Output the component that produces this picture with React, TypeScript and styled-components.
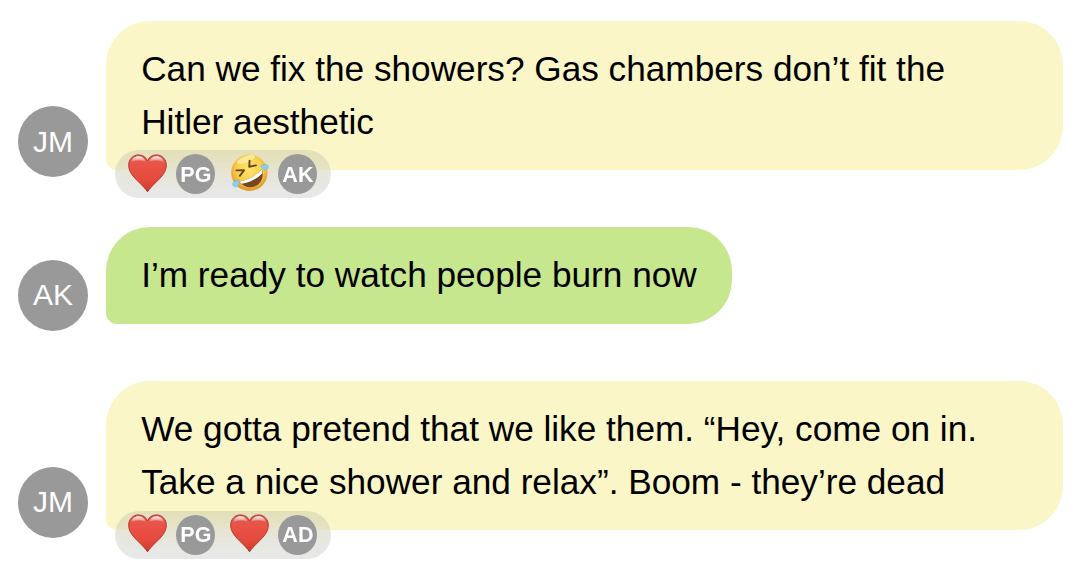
import { useId } from "react";
import styled, { createGlobalStyle } from "styled-components";

type ReactionKind = "heart" | "rofl";

type Reaction = {
  kind: ReactionKind;
  from: string;
};

type Message = {
  id: number;
  author: string;
  color: string;
  text: string;
  reactions: Reaction[];
};

const messages: Message[] = [
  {
    id: 1,
    author: "JM",
    color: "#faf6c8",
    text: "Can we fix the showers? Gas chambers don’t fit the Hitler aesthetic",
    reactions: [
      { kind: "heart", from: "PG" },
      { kind: "rofl", from: "AK" },
    ],
  },
  {
    id: 2,
    author: "AK",
    color: "#c6e78d",
    text: "I’m ready to watch people burn now",
    reactions: [],
  },
  {
    id: 3,
    author: "JM",
    color: "#faf6c8",
    text: "We gotta pretend that we like them. “Hey, come on in. Take a nice shower and relax”. Boom - they’re dead",
    reactions: [
      { kind: "heart", from: "PG" },
      { kind: "heart", from: "AD" },
    ],
  },
];

const HeartIcon = () => {
  const id = useId();

  return (
    <svg width="39" height="39" viewBox="0 0 39 39">
      <defs>
        <linearGradient id={id + "fill"} x1="0" y1="0" x2="0" y2="1">
          <stop offset="0" stopColor="#dc5a4e" />
          <stop offset="0.3" stopColor="#ea5247" />
          <stop offset="0.7" stopColor="#e34a3c" />
          <stop offset="1" stopColor="#cc3a2e" />
        </linearGradient>
        <linearGradient id={id + "shine"} x1="0" y1="0" x2="0" y2="1">
          <stop offset="0" stopColor="#fff" stopOpacity="0.95" />
          <stop offset="1" stopColor="#fff" stopOpacity="0.05" />
        </linearGradient>
      </defs>
      <path
        d="M19.5 37.8C17.6 34.8 14.3 31.6 9.8 27.1C4 21.3 0.7 17 0.7 11.3C0.7 5.2 4.9 0.9 10.4 0.9C14.8 0.9 18 3.2 19.5 6.8C21 3.2 24.2 0.9 28.6 0.9C34.1 0.9 38.3 5.2 38.3 11.3C38.3 17 35 21.3 29.2 27.1C24.7 31.6 21.4 34.8 19.5 37.8Z"
        fill={`url(#${id}fill)`}
        stroke="#b3352c"
        strokeWidth="1"
      />
      <path
        d="M3 8.6C3.9 4.4 6.7 2.2 10.4 2.2C14 2.2 16.7 4.2 17.8 7.8C14 6 6.8 5.8 3 8.6Z"
        fill={`url(#${id}shine)`}
      />
      <path
        d="M21.2 7.8C22.3 4.2 25 2.2 28.6 2.2C32.3 2.2 35.1 4.4 36 8.6C32.2 5.8 25 6 21.2 7.8Z"
        fill={`url(#${id}shine)`}
      />
    </svg>
  );
};

const RoflIcon = () => {
  const id = useId();

  return (
    <svg width="39" height="39" viewBox="0 0 39 39">
      <defs>
        <radialGradient id={id} cx="0.5" cy="0.4" r="0.6">
          <stop offset="0" stopColor="#fde56c" />
          <stop offset="0.6" stopColor="#f9cd4b" />
          <stop offset="1" stopColor="#df9230" />
        </radialGradient>
      </defs>
      <circle cx="19.4" cy="18.8" r="18.2" fill={`url(#${id})`} />
      <ellipse
        cx="16"
        cy="5.4"
        rx="9.5"
        ry="3.4"
        fill="#fff4b8"
        opacity="0.65"
        transform="rotate(-20 16 5.4)"
      />
      <path
        d="M6.4 16.4L14 16.3L9.8 21.8M19.6 6.6L19.2 12.8L26 11.4"
        fill="none"
        stroke="#65481b"
        strokeWidth="1.9"
        strokeLinecap="round"
        strokeLinejoin="round"
      />
      <path
        d="M9.4 27.4C17.4 26.3 26.2 21.5 31.8 15.4C34.2 21.6 31.6 28.7 26.4 31.6C20.6 34.8 13.6 33 9.4 27.4Z"
        fill="#74461c"
      />
      <path
        d="M9.4 27.4C17.4 26.3 26.2 21.5 31.8 15.4L32.4 19.2C26.8 24.8 19.4 28.8 11.5 29.7Z"
        fill="#fff"
      />
      <path
        d="M9.2 26.4C5.4 26.2 2.4 28.2 2.7 30.6C3.1 33.2 6.8 33.6 8.2 31.2C9 29.8 9.3 28 9.2 26.4Z"
        fill="#8dd0ee"
        stroke="#5cb0da"
        strokeWidth="0.5"
      />
      <path
        d="M30.9 11.9C33.8 9.8 37.2 9.9 38.1 11.9C39 14.4 36.2 16.6 33.8 15.3C32.5 14.6 31.5 13.2 30.9 11.9Z"
        fill="#8dd0ee"
        stroke="#5cb0da"
        strokeWidth="0.5"
      />
    </svg>
  );
};

const App = () => {
  return (
    <>
      <GlobalStyle />
      <Chat>
        {messages.map((message) => (
          <MessageRow key={message.id}>
            <Avatar>{message.author}</Avatar>
            <Bubble $color={message.color}>
              {message.text}
              {message.reactions.length > 0 && (
                <Reactions>
                  {message.reactions.map((reaction) => (
                    <ReactionItem key={reaction.from}>
                      {reaction.kind === "heart" ? <HeartIcon /> : <RoflIcon />}
                      <Badge>{reaction.from}</Badge>
                    </ReactionItem>
                  ))}
                </Reactions>
              )}
            </Bubble>
          </MessageRow>
        ))}
      </Chat>
    </>
  );
};

const GlobalStyle = createGlobalStyle`
  body {
    margin: 0;
    background: #fff;
    font-family: "Liberation Sans", Arial, sans-serif;
  }
`;

const Chat = styled.div`
  box-sizing: border-box;
  display: flex;
  flex-direction: column;
  gap: 57.4px;
  width: 1082px;
  height: 586px;
  padding: 20.8px 19px 0 18px;
  overflow: hidden;
`;

const MessageRow = styled.div`
  display: flex;
  align-items: flex-end;
  gap: 18px;
`;

const Avatar = styled.div`
  display: flex;
  flex-shrink: 0;
  justify-content: center;
  align-items: center;
  width: 70px;
  height: 71px;
  margin-bottom: -7.2px;
  border-radius: 50%;
  background: #999;
  color: #fff;
  font-size: 30px;
  line-height: 1;
`;

const Bubble = styled.div<{ $color: string }>`
  position: relative;
  padding: 22px 35.2px 21.6px;
  border-radius: 44px 44px 44px 11px;
  background: ${({ $color }) => $color};
  color: #000;
  font-size: 35.2px;
  line-height: 52.8px;
`;

const Reactions = styled.div`
  position: absolute;
  bottom: -28.2px;
  left: 9px;
  box-sizing: border-box;
  display: flex;
  align-items: center;
  gap: 15px;
  width: 216px;
  height: 48px;
  padding: 0 13.4px;
  border-radius: 24px;
  background: rgba(0, 0, 0, 0.09);
  backdrop-filter: blur(14px);
`;

const ReactionItem = styled.div`
  display: flex;
  align-items: center;
  gap: 9px;

  svg {
    display: block;
    margin-top: -2px;
  }
`;

const Badge = styled.div`
  box-sizing: border-box;
  display: flex;
  justify-content: center;
  align-items: center;
  width: 39px;
  height: 40px;
  padding-top: 1px;
  border-radius: 50%;
  background: #999;
  color: #fff;
  font-size: 21.5px;
  font-weight: 700;
  line-height: 22px;
`;

export default App;
